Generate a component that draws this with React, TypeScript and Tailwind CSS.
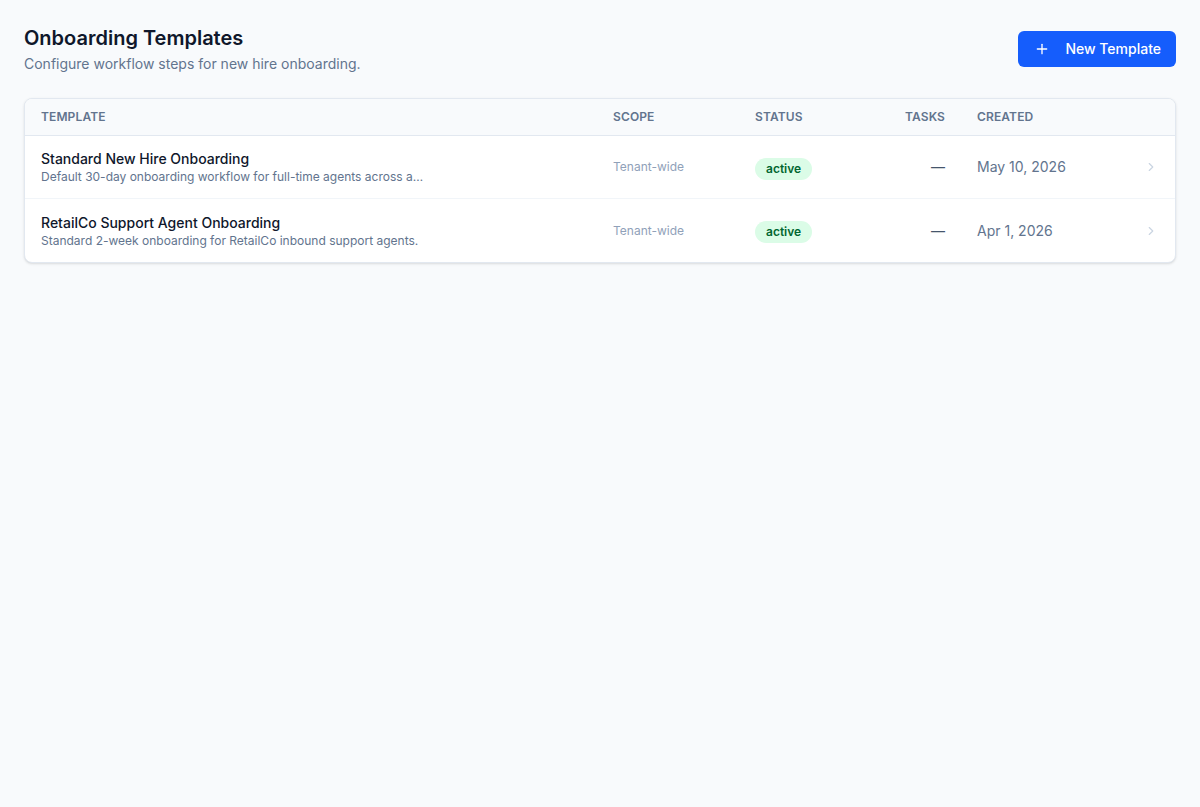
import { ChevronRight, Plus } from 'lucide-react';

type Template = {
  name: string;
  description: string;
  scope: string;
  status: string;
  tasks: string;
  created: string;
};

const templates: Template[] = [
  {
    name: 'Standard New Hire Onboarding',
    description: 'Default 30-day onboarding workflow for full-time agents across all sites and programs.',
    scope: 'Tenant-wide',
    status: 'active',
    tasks: '—',
    created: 'May 10, 2026',
  },
  {
    name: 'RetailCo Support Agent Onboarding',
    description: 'Standard 2-week onboarding for RetailCo inbound support agents.',
    scope: 'Tenant-wide',
    status: 'active',
    tasks: '—',
    created: 'Apr 1, 2026',
  },
];

const cols = 'grid grid-cols-[572px_142px_142px_80px_166px_1fr] items-center';

export default function App() {
  return (
    <div className="min-h-screen bg-[#f8fafc] text-slate-900" style={{ fontFamily: 'Inter, "Noto Sans", sans-serif' }}>
      <div className="px-6 pt-6">
        <div className="flex items-start justify-between">
          <div>
            <h1 className="text-xl font-semibold leading-7 text-slate-900">Onboarding Templates</h1>
            <p className="text-sm text-slate-500 mt-[2px]">Configure workflow steps for new hire onboarding.</p>
          </div>
          <button className="mt-[7px] flex items-center gap-[15px] h-9 pl-4 pr-[15px] rounded-md bg-[#155dfc] text-white text-sm font-medium">
            <Plus className="w-4 h-4" strokeWidth={2} />
            New Template
          </button>
        </div>

        <div className="mt-[24px] bg-white border border-slate-200 rounded-lg shadow-sm overflow-hidden">
          <div className={`${cols} h-[37px] bg-slate-50 border-b border-slate-200 text-xs font-semibold uppercase tracking-[0.01em] text-slate-500`}>
            <div className="px-4">Template</div>
            <div className="px-4">Scope</div>
            <div className="px-4">Status</div>
            <div className="px-4 text-right">Tasks</div>
            <div className="px-4">Created</div>
            <div />
          </div>
          {templates.map((t, i) => (
            <div
              key={t.name}
              className={`${cols} h-[63px] ${i < templates.length - 1 ? 'border-b border-slate-100' : ''}`}
            >
              <div className="px-4 min-w-0">
                <div className="text-sm font-medium text-slate-900 leading-5">{t.name}</div>
                <div className="text-xs text-slate-500 truncate max-w-[384px] leading-4">{t.description}</div>
              </div>
              <div className="px-4 text-xs text-slate-400">{t.scope}</div>
              <div className="px-4">
                <span className="inline-flex items-center h-[22px] px-[11px] rounded-full bg-green-100 text-green-800 text-xs font-semibold">
                  {t.status}
                </span>
              </div>
              <div className="px-4 text-right text-sm text-slate-600">{t.tasks}</div>
              <div className="px-4 text-sm text-slate-500">{t.created}</div>
              <div className="flex justify-center">
                <ChevronRight className="w-3.5 h-3.5 text-slate-300" />
              </div>
            </div>
          ))}
        </div>
      </div>
    </div>
  );
}
